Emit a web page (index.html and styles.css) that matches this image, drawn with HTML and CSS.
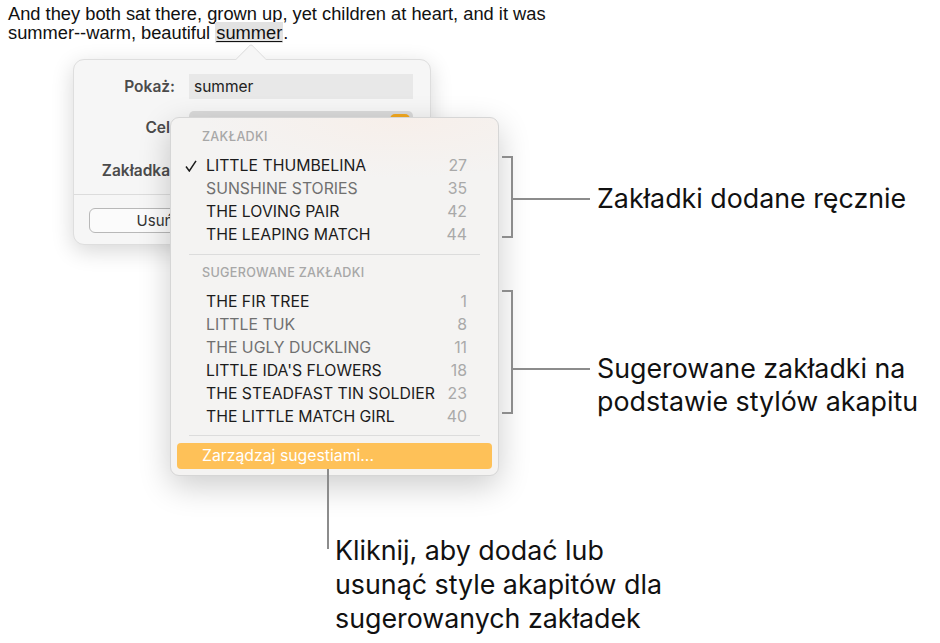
FILE: index.html
```html
<!DOCTYPE html>
<html lang="pl">

<head>
    <meta charset="UTF-8">
    <meta name="viewport" content="width=device-width, initial-scale=1.0">
    <title>Zakładki</title>
    <link rel="stylesheet" href="styles.css">
</head>

<body>
    <div class="page">
        <p class="story">And they both sat there, grown up, yet children at heart, and it was<br>summer--warm, beautiful <span class="mark">summer</span>.</p>

        <!-- okno linku pod zaznaczonym słowem -->
        <div class="popover">
            <div class="arrow"></div>
            <div class="row show">
                <span class="label">Pokaż:</span>
                <div class="field">summer</div>
            </div>
            <div class="row target">
                <span class="label">Cel:</span>
                <div class="field select"><span class="badge"></span></div>
            </div>
            <div class="row bookmark">
                <span class="label">Zakładka:</span>
                <div class="field select"></div>
            </div>
            <div class="rule"></div>
            <div class="actions">
                <button class="btn">Usuń</button>
            </div>
        </div>

        <!-- rozwinięte menu zakładek -->
        <div class="menu">
            <div class="menu-head">ZAKŁADKI</div>
            <ul class="items">
                <li class="item"><svg class="check" width="12" height="12" viewBox="0 0 12 12"><polyline points="1,6.5 4.3,11 11,0.8" /></svg><span>LITTLE THUMBELINA</span><span class="num">27</span></li>
                <li class="item dim"><span>SUNSHINE STORIES</span><span class="num">35</span></li>
                <li class="item"><span>THE LOVING PAIR</span><span class="num">42</span></li>
                <li class="item"><span>THE LEAPING MATCH</span><span class="num">44</span></li>
            </ul>
            <div class="sep"></div>
            <div class="menu-head">SUGEROWANE ZAKŁADKI</div>
            <ul class="items">
                <li class="item"><span>THE FIR TREE</span><span class="num">1</span></li>
                <li class="item dim"><span>LITTLE TUK</span><span class="num">8</span></li>
                <li class="item dim"><span>THE UGLY DUCKLING</span><span class="num">11</span></li>
                <li class="item"><span>LITTLE IDA'S FLOWERS</span><span class="num">18</span></li>
                <li class="item"><span>THE STEADFAST TIN SOLDIER</span><span class="num">23</span></li>
                <li class="item"><span>THE LITTLE MATCH GIRL</span><span class="num">40</span></li>
            </ul>
            <div class="sep last"></div>
            <div class="manage">Zarządzaj sugestiami...</div>
        </div>

        <!-- objaśnienia -->
        <div class="bracket top"></div>
        <div class="callout first">
            <div class="leader"></div>
            <div class="note">Zakładki dodane ręcznie</div>
        </div>

        <div class="bracket bottom"></div>
        <div class="callout second">
            <div class="leader"></div>
            <div class="note">Sugerowane zakładki na<br>podstawie stylów akapitu</div>
        </div>

        <div class="drop"></div>
        <div class="note below">Kliknij, aby dodać lub<br>usunąć style akapitów dla<br>sugerowanych zakładek</div>
    </div>
</body>

</html>
```

FILE: styles.css
```css
body {
    margin: 0;
    background-color: #fff;
    font-family: Inter, "Liberation Sans", sans-serif;
}

.page {
    position: relative;
    width: 940px;
    height: 643px;
    overflow: hidden;
}

.story {
    margin: 0;
    padding: 4px 8px 0;
    font-family: "Liberation Sans", Arial, sans-serif;
    font-size: 18.3px;
    line-height: 19px;
    color: #111;
}

.mark {
    background-color: #e2e2e2;
    text-decoration: underline;
    text-decoration-thickness: 1px;
    text-underline-offset: 2px;
    padding: 0 1px;
}

/* popover */
.popover {
    position: absolute;
    left: 73px;
    top: 59px;
    width: 358px;
    height: 186px;
    box-sizing: border-box;
    padding-top: 14px;
    background-color: #f6f6f6;
    border: 1px solid #dedede;
    border-radius: 11px;
    box-shadow: 0 6px 22px rgba(0, 0, 0, 0.16);
}

.arrow {
    position: absolute;
    left: 166px;
    top: -12px;
    width: 21px;
    height: 21px;
    background-color: #f6f6f6;
    border-top: 1px solid #dedede;
    border-left: 1px solid #dedede;
    transform: rotate(45deg);
    border-top-left-radius: 3px;
}

.row {
    display: flex;
    align-items: center;
    height: 25px;
    padding-right: 17px;
}

.row.target {
    height: 32px;
    margin-top: 12px;
}

.row.bookmark {
    margin-top: 15px;
}

.label {
    width: 101px;
    margin-right: 14px;
    text-align: right;
    font-size: 15.5px;
    font-weight: 600;
    color: #4b4b4b;
}

.field {
    position: relative;
    flex: 1;
    height: 25px;
    box-sizing: border-box;
    padding-left: 5px;
    background-color: #e8e8e8;
    font-size: 15.5px;
    line-height: 25px;
    color: #222;
}

.field.select {
    align-self: stretch;
    height: auto;
    background-color: #dadada;
    border-radius: 5px;
}

.badge {
    position: absolute;
    right: 3px;
    top: 3px;
    width: 20px;
    height: 19px;
    border-radius: 5px;
    background-color: #f3a81f;
}

.rule {
    height: 1px;
    margin-top: 11px;
    background-color: #dcdcdc;
}

.actions {
    padding: 13px 0 0 15px;
}

.btn {
    width: 132px;
    height: 25px;
    background-color: #fbfbfb;
    border: 1px solid #b8b8b8;
    border-radius: 6px;
    font-family: Inter, sans-serif;
    font-size: 15px;
    color: #333;
}

/* menu */
.menu {
    position: absolute;
    left: 170px;
    top: 117px;
    width: 329px;
    height: 359px;
    box-sizing: border-box;
    padding: 7px 0 8px;
    background: radial-gradient(ellipse 200px 60px at 230px 0, #f7efea, rgba(245, 243, 242, 0)), #f4f3f2;
    border: 1px solid #d6d6d6;
    border-radius: 9px;
    box-shadow: 0 10px 32px rgba(0, 0, 0, 0.2);
}

.menu-head {
    height: 24px;
    padding-left: 31px;
    font-size: 12.6px;
    font-weight: 500;
    line-height: 24px;
    letter-spacing: 0.3px;
    color: #a7a7a7;
}

.items {
    list-style: none;
    margin: 5px 0 0;
    padding: 0 31px 0 35px;
}

.item {
    position: relative;
    display: flex;
    justify-content: space-between;
    height: 23px;
    font-size: 15.8px;
    line-height: 23px;
    color: #1c1c1c;
}

.item.dim {
    color: #707070;
}

.num {
    color: #a9a9a9;
}

.check {
    position: absolute;
    left: -21px;
    top: 6px;
    fill: none;
    stroke: #1c1c1c;
    stroke-width: 1.5;
}

.sep {
    height: 1px;
    margin: 8px 18px 6px;
    background-color: #dcdcdc;
}

.sep.last {
    margin: 7px 18px 0;
}

.manage {
    height: 26px;
    margin: 7px 6px 0;
    padding-left: 25px;
    border-radius: 4px;
    background-color: #fec158;
    font-size: 15.8px;
    line-height: 26px;
    color: #fff;
}

/* objaśnienia */
.bracket {
    position: absolute;
    left: 502px;
    width: 9px;
    border: 2px solid #8c8c8c;
    border-left: none;
}

.bracket.top {
    top: 156px;
    height: 78px;
}

.bracket.bottom {
    top: 290px;
    height: 120px;
}

.callout {
    position: absolute;
    left: 511px;
    display: flex;
    align-items: flex-start;
}

.callout.first {
    top: 182px;
}

.callout.second {
    top: 352px;
}

.leader {
    width: 79px;
    height: 2px;
    margin-top: 16px;
    background-color: #8c8c8c;
}

.note {
    margin-left: 7px;
    font-size: 26.8px;
    line-height: 33px;
    color: #111;
}

.drop {
    position: absolute;
    left: 327px;
    top: 469px;
    width: 2px;
    height: 80px;
    background-color: #8c8c8c;
}

.note.below {
    position: absolute;
    left: 328px;
    top: 533px;
    line-height: 34px;
}
```
